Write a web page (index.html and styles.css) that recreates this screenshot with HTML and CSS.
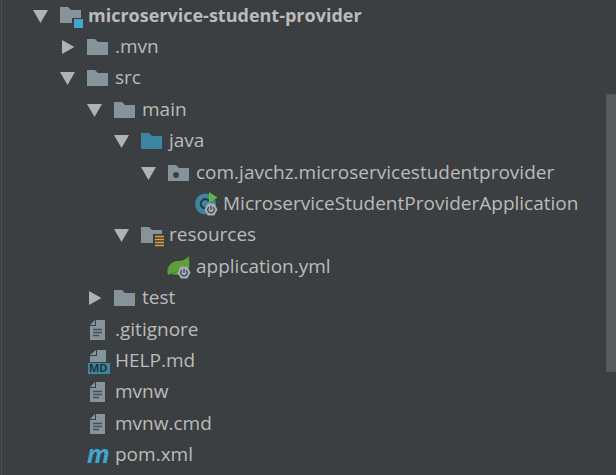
FILE: index.html
```html
<!DOCTYPE html>
<html lang="en">
<head>
<meta charset="utf-8">
<title>Project</title>
<link rel="stylesheet" href="styles.css">
</head>
<body>
<svg class="defs" aria-hidden="true">
  <symbol id="down" viewBox="0 0 14 14"><path d="M0 1H15L7.500 14Z" fill="#afb1b3"/></symbol>
  <symbol id="right" viewBox="0 0 14 14"><path d="M2 0L14.500 7L2 14Z" fill="#afb1b3"/></symbol>
  <symbol id="folder" viewBox="0 0 24 24"><path d="M1 4H9L12 7H22V20H1Z"/></symbol>
  <symbol id="module" viewBox="0 0 24 24"><path d="M1 3H9L12 6H22V14H13V19H1Z" fill="#87939a"/><path d="M15 15H24V24H15Z" fill="#40a5d0"/></symbol>
  <symbol id="package" viewBox="0 0 24 24"><path fill-rule="evenodd" d="M1 4H9L12 7H22V20H1ZM9 11a3 3 0 1 0 0 6a3 3 0 1 0 0-6Z" fill="#87939a"/></symbol>
  <symbol id="resources" viewBox="0 0 24 24"><path d="M1 4H9L12 7H22V11H13V20H1Z" fill="#87939a"/><path d="M15 13.500H24M15 16.500H24M15 19.500H24M15 22.500H24" stroke="#d9a343" stroke-width="1.500"/></symbol>
  <symbol id="power" viewBox="0 0 14 14"><path d="M3.500 .5H10.500L14 7L10.500 13.500H3.500L0 7Z" fill="#a5b0b8"/><path d="M4.700 4.500A3.500 3.500 0 1 0 9.300 4.500M7 3V7.500" fill="none" stroke="#353b40" stroke-width="1.300"/></symbol>
  <symbol id="app" viewBox="0 0 24 24"><circle cx="11.500" cy="12" r="10.500" fill="#3c86a0"/><path d="M15 9A4.600 4.600 0 1 0 13 16" fill="none" stroke="#29363d" stroke-width="2"/><path d="M15 0L23.500 5.500L15 11Z" fill="#62b543"/><use href="#power" x="10" y="11" width="14" height="13"/></symbol>
  <symbol id="spring" viewBox="0 0 24 24"><path d="M21.500 1C23 8 23 13 20 17C16 21 8 20 3 19L1 20C-1 13 3 7 10 6C15 6 19 5 21.500 1Z" fill="#5d9f3b"/><path d="M3 18.500C9 18 14 15 18 10" fill="none" stroke="#477c31" stroke-width="1"/><use href="#power" x="10" y="11" width="14" height="13"/></symbol>
  <symbol id="file" viewBox="0 0 24 24"><path d="M10 2H19V22H4V8H10Z" fill="#87939a"/><path d="M4 7L9 2V7Z" fill="#87939a"/><path d="M7 11.500H16M7 14.500H16M7 17.500H13" stroke="#45505a" stroke-width="1.400"/></symbol>
</svg>
<main class="panel">
  <ul class="tree" aria-label="Project files">
    <li class="row root"><button class="toggle" aria-label="Collapse"><svg><use href="#down"/></svg></button><svg class="icon"><use href="#module"/></svg><span>microservice-student-provider</span></li>
    <li class="row d1"><button class="toggle" aria-label="Expand"><svg><use href="#right"/></svg></button><svg class="icon"><use href="#folder"/></svg><span>.mvn</span></li>
    <li class="row d1"><button class="toggle" aria-label="Collapse"><svg><use href="#down"/></svg></button><svg class="icon"><use href="#folder"/></svg><span>src</span></li>
    <li class="row d2"><button class="toggle" aria-label="Collapse"><svg><use href="#down"/></svg></button><svg class="icon"><use href="#folder"/></svg><span>main</span></li>
    <li class="row d3"><button class="toggle" aria-label="Collapse"><svg><use href="#down"/></svg></button><svg class="icon source"><use href="#folder"/></svg><span>java</span></li>
    <li class="row d4"><button class="toggle" aria-label="Collapse"><svg><use href="#down"/></svg></button><svg class="icon"><use href="#package"/></svg><span>com.javchz.microservicestudentprovider</span></li>
    <li class="row leaf d5"><svg class="icon"><use href="#app"/></svg><span>MicroserviceStudentProviderApplication</span></li>
    <li class="row d3"><button class="toggle" aria-label="Collapse"><svg><use href="#down"/></svg></button><svg class="icon"><use href="#resources"/></svg><span>resources</span></li>
    <li class="row leaf d4"><svg class="icon"><use href="#spring"/></svg><span>application.yml</span></li>
    <li class="row d2"><button class="toggle" aria-label="Expand"><svg><use href="#right"/></svg></button><svg class="icon"><use href="#folder"/></svg><span>test</span></li>
    <li class="row leaf d1"><svg class="icon"><use href="#file"/></svg><span>.gitignore</span></li>
    <li class="row leaf d1"><svg class="icon" viewBox="0 0 24 24"><path d="M11 1H20V13H4V7H11Z"/><path d="M4 6L10 1V6Z"/><path d="M2 14H24V25H2Z" fill="#3c86a0"/><text class="md" x="3" y="23">MD</text></svg><span>HELP.md</span></li>
    <li class="row leaf d1"><svg class="icon"><use href="#file"/></svg><span>mvnw</span></li>
    <li class="row leaf d1"><svg class="icon"><use href="#file"/></svg><span>mvnw.cmd</span></li>
    <li class="row leaf d1"><svg class="icon" viewBox="0 0 24 24"><text class="m" x="1" y="20">m</text></svg><span>pom.xml</span></li>
  </ul>
  <div class="thumb"></div>
</main>
</body>
</html>
```
FILE: styles.css
```css
* { box-sizing: border-box; }
body {
  margin: 0;
  background: #3c3f41;
  color: #bbbbbb;
  font: 19px/24px "Open Sans", "Noto Sans", sans-serif;
}
.defs { position: absolute; width: 0; height: 0; }
.panel {
  position: relative;
  min-height: 100vh;
  display: grid;
}
.panel::before {
  content: "";
  position: absolute;
  left: 1px;
  top: 0;
  bottom: 0;
  width: 1px;
  background: #4b4e50;
}
.tree {
  list-style: none;
  margin: 0;
  padding: 0 0 4px;
  display: grid;
  grid-auto-rows: minmax(31px, 1fr);
}
.row {
  --depth: 0;
  display: flex;
  align-items: center;
  padding-left: calc(33px + 27px * var(--depth));
  white-space: nowrap;
}
.row span { padding-bottom: 2px; }
.leaf { padding-left: calc(59px + 27px * var(--depth)); }
.d1 { --depth: 1; }
.d2 { --depth: 2; }
.d3 { --depth: 3; }
.d4 { --depth: 4; }
.d5 { --depth: 5; }
.root { font-size: 18px; font-weight: bold; }
.toggle {
  width: 14px;
  height: 14px;
  margin: 0 12px 0 0;
  padding: 0;
  border: 0;
  background: none;
}
.toggle svg { display: block; width: 14px; height: 14px; overflow: visible; }
.icon {
  flex: none;
  width: 24px;
  height: 24px;
  margin-right: 5px;
  overflow: visible;
  fill: #87939a;
}
.icon.source { fill: #3c86a0; }
symbol { overflow: visible; }
.md { font: bold 11px "Open Sans", sans-serif; fill: #23323b; }
.m { font: italic bold 25px "Open Sans", sans-serif; fill: #40a5d0; }
.thumb {
  position: absolute;
  right: 0;
  top: 19.8%;
  width: 10px;
  height: 58.5%;
  background: #595b5d;
  border: 1px solid #525456;
  border-right: 0;
}
```
